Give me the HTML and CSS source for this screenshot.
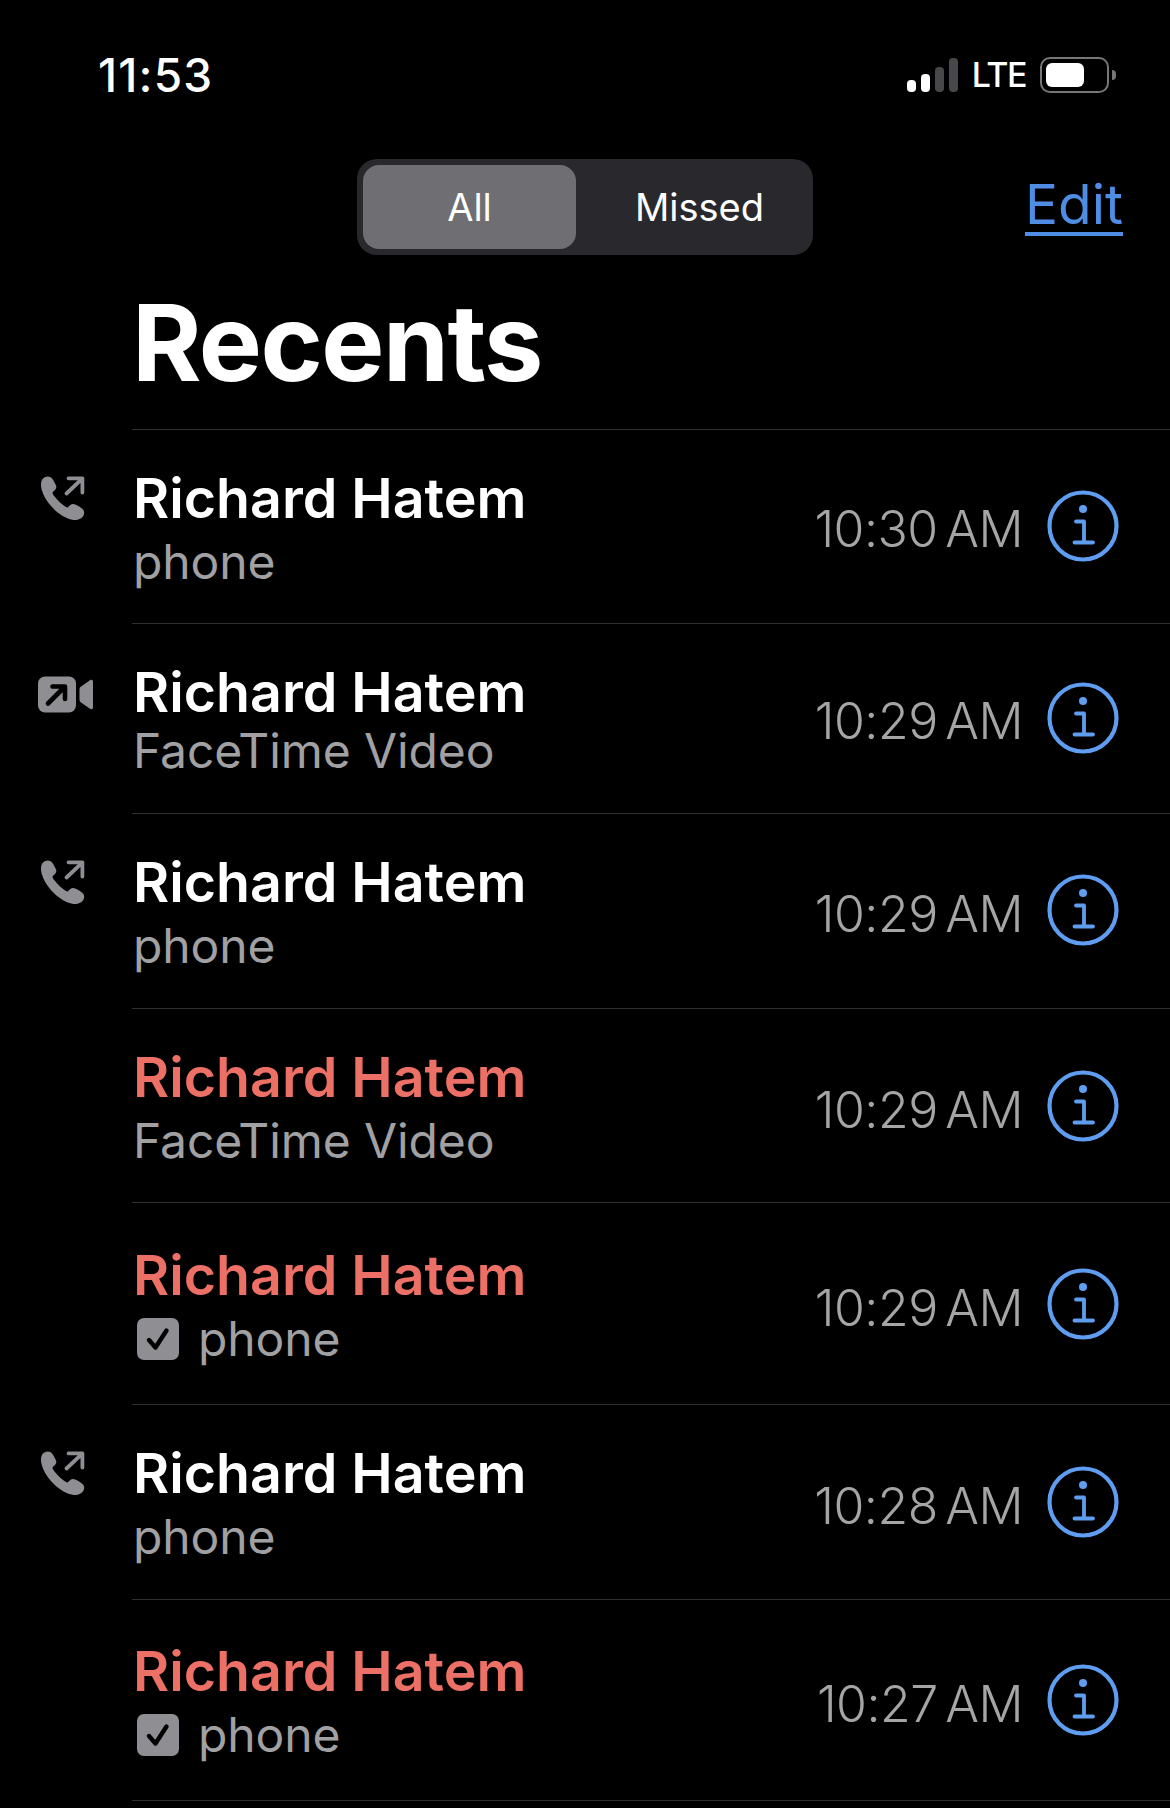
FILE: index.html
```html
<!DOCTYPE html>
<html lang="en">

<head>
    <meta charset="UTF-8">
    <meta name="viewport" content="width=device-width, initial-scale=1.0">
    <title>Recents</title>
    <link rel="stylesheet" href="styles.css">
</head>

<body>
    <svg class="defs" width="0" height="0" aria-hidden="true">
        <symbol id="icon-outgoing" viewBox="0 0 44 44">
            <path d="M1.500 3C3.500 .5 7.500 -.3 10 1.500C11.800 2.800 14 7 15 9.500C15.800 11.500 15 13.200 13.500 14.500L12 15.800C11.400 16.500 11.400 17.300 12 18.300C14.500 22.500 20 28 25 31C26 31.600 26.800 31.600 27.500 30.800L29 29.300C30.500 27.800 32.300 27.500 34.300 28.500C37 29.800 40.500 31.800 42 33.500C43.800 35.500 43.500 38.800 41.500 41C39 43.600 35.500 44.500 31.500 43.800C23 42.300 13.500 35 7.500 27C2.500 20.500 -.500 13 0 7.500C.200 5.800 .700 4 1.500 3Z" fill="currentColor" />
            <path d="M25.500 17.500L41 2.800M27.500 2.300H41.400V16.500" fill="none" stroke="currentColor" stroke-width="3.800" stroke-linecap="round" stroke-linejoin="round" />
        </symbol>
        <symbol id="icon-video" viewBox="0 0 56 38">
            <rect x="0" y="0.500" width="38" height="36" rx="7" fill="currentColor" />
            <path d="M10 27.500L26 11.500M14.500 10.500H27V23" fill="none" stroke="#000" stroke-width="4.600" stroke-linecap="round" stroke-linejoin="round" />
            <path d="M41.500 13.500C41.500 12.200 42 11.300 43 10.500L52 4.200C53.500 3.200 55 4 55 5.800V31.200C55 33 53.500 33.800 52 32.800L43 26.500C42 25.700 41.500 24.800 41.500 23.500Z" fill="currentColor" />
        </symbol>
        <symbol id="icon-info" viewBox="0 0 72 72">
            <circle cx="36" cy="36" r="33.500" fill="none" stroke="currentColor" stroke-width="4.200" />
            <circle cx="36" cy="19" r="4" fill="currentColor" />
            <path d="M29 31.500H37V52.500M27.500 52.500H46" fill="none" stroke="currentColor" stroke-width="3.800" stroke-linecap="round" stroke-linejoin="round" />
        </symbol>
        <symbol id="icon-check" viewBox="0 0 42 42">
            <rect width="42" height="42" rx="7" fill="currentColor" />
            <path d="M12 22L18.500 29.500L29.500 12.500" fill="none" stroke="#000" stroke-width="4.400" stroke-linecap="round" stroke-linejoin="round" />
        </symbol>
    </svg>

    <div class="status-bar">
        <span class="clock">11:53</span>
        <div class="status-icons">
            <div class="signal">
                <span class="bar bar1"></span>
                <span class="bar bar2"></span>
                <span class="bar bar3 off"></span>
                <span class="bar bar4 off"></span>
            </div>
            <span class="network">LTE</span>
            <div class="battery"><span class="battery-fill"></span></div>
            <span class="battery-nub"></span>
        </div>
    </div>

    <div class="nav">
        <div class="segments">
            <span class="segment selected">All</span>
            <span class="segment missed-tab">Missed</span>
        </div>
        <a class="edit" href="#">Edit</a>
    </div>

    <h1 class="title">Recents</h1>

    <ul class="calls">
        <li class="call">
            <div class="call-type"><svg class="icon-outgoing"><use href="#icon-outgoing" /></svg></div>
            <div class="call-body">
                <div class="call-text">
                    <div class="name">Richard Hatem</div>
                    <div class="label">phone</div>
                </div>
                <span class="time">10:30 AM</span>
                <svg class="info"><use href="#icon-info" /></svg>
            </div>
        </li>
        <li class="call short">
            <div class="call-type"><svg class="icon-video"><use href="#icon-video" /></svg></div>
            <div class="call-body">
                <div class="call-text">
                    <div class="name">Richard Hatem</div>
                    <div class="label tight">FaceTime Video</div>
                </div>
                <span class="time">10:29 AM</span>
                <svg class="info"><use href="#icon-info" /></svg>
            </div>
        </li>
        <li class="call wide">
            <div class="call-type"><svg class="icon-outgoing"><use href="#icon-outgoing" /></svg></div>
            <div class="call-body">
                <div class="call-text">
                    <div class="name">Richard Hatem</div>
                    <div class="label">phone</div>
                </div>
                <span class="time">10:29 AM</span>
                <svg class="info"><use href="#icon-info" /></svg>
            </div>
        </li>
        <li class="call lower">
            <div class="call-type"></div>
            <div class="call-body">
                <div class="call-text">
                    <div class="name missed">Richard Hatem</div>
                    <div class="label">FaceTime Video</div>
                </div>
                <span class="time">10:29 AM</span>
                <svg class="info"><use href="#icon-info" /></svg>
            </div>
        </li>
        <li class="call tall lower">
            <div class="call-type"></div>
            <div class="call-body">
                <div class="call-text">
                    <div class="name missed">Richard Hatem</div>
                    <div class="label"><svg class="check"><use href="#icon-check" /></svg>phone</div>
                </div>
                <span class="time">10:29 AM</span>
                <svg class="info"><use href="#icon-info" /></svg>
            </div>
        </li>
        <li class="call wide lower">
            <div class="call-type"><svg class="icon-outgoing"><use href="#icon-outgoing" /></svg></div>
            <div class="call-body">
                <div class="call-text">
                    <div class="name">Richard Hatem</div>
                    <div class="label">phone</div>
                </div>
                <span class="time">10:28 AM</span>
                <svg class="info"><use href="#icon-info" /></svg>
            </div>
        </li>
        <li class="call tall lower last">
            <div class="call-type"></div>
            <div class="call-body">
                <div class="call-text">
                    <div class="name missed">Richard Hatem</div>
                    <div class="label"><svg class="check"><use href="#icon-check" /></svg>phone</div>
                </div>
                <span class="time">10:27 AM</span>
                <svg class="info"><use href="#icon-info" /></svg>
            </div>
        </li>
    </ul>
</body>

</html>
```

FILE: styles.css
```css
/* Basic page styling */
body {
    margin: 0;
    height: 1808px;
    overflow: hidden;
    background-color: #000;
    color: #fff;
    font-family: Inter, "Liberation Sans", sans-serif;
}

.defs {
    display: block;
    height: 0;
}

/* Status bar */
.status-bar {
    display: flex;
    align-items: center;
    justify-content: space-between;
    height: 150px;
    padding: 0 54px 0 98px;
}

.clock {
    font-size: 46px;
    font-weight: 500;
    letter-spacing: 1.2px;
}

.status-icons {
    display: flex;
    align-items: center;
}

.signal {
    display: flex;
    align-items: flex-end;
    gap: 5px;
    height: 34px;
}

.bar {
    width: 9px;
    border-radius: 4px;
    background-color: #fff;
}

.bar1 {
    height: 12px;
}

.bar2 {
    height: 18px;
}

.bar3 {
    height: 25px;
}

.bar4 {
    height: 34px;
}

.bar.off {
    background-color: #48484a;
}

.network {
    margin-left: 14px;
    font-size: 34px;
    font-weight: 500;
    line-height: 34px;
    letter-spacing: -1.5px;
}

.battery {
    display: flex;
    align-items: center;
    box-sizing: border-box;
    width: 69px;
    height: 36px;
    margin-left: 14px;
    padding-left: 4px;
    border: 2px solid #77777a;
    border-radius: 10px;
}

.battery-fill {
    width: 38px;
    height: 24px;
    border-radius: 6px;
    background-color: #fff;
}

.battery-nub {
    width: 4px;
    height: 10px;
    margin-left: 3px;
    border-radius: 0 5px 5px 0;
    background-color: #77777a;
}

/* Segmented control and edit link */
.nav {
    display: flex;
    align-items: center;
    justify-content: space-between;
    height: 96px;
    margin-top: 9px;
    padding: 0 47px 0 357px;
}

.segments {
    display: flex;
    box-sizing: border-box;
    width: 456px;
    height: 96px;
    padding: 6px;
    border-radius: 20px;
    background-color: #29292d;
}

.segment {
    display: flex;
    align-items: center;
    justify-content: center;
    flex: 1;
    font-size: 38px;
    font-weight: 400;
}

.segment.selected {
    flex: 0 0 213px;
    border-radius: 16px;
    background-color: #6e6e73;
}

.missed-tab {
    padding-left: 16px;
}

.edit {
    margin-top: -2px;
    color: #4f8de4;
    font-size: 55px;
    line-height: 56px;
    text-decoration: none;
    border-bottom: 4px solid #4f8de4;
}

/* Large title */
.title {
    margin: 20px 0 0 132px;
    height: 153px;
    font-size: 106px;
    font-weight: 700;
    line-height: 135px;
    letter-spacing: -1.5px;
}

/* Call rows */
.calls {
    margin: 0;
    padding: 0;
    list-style: none;
    border-top: 1px solid transparent;
}

.call {
    display: flex;
    height: 194px;
}

.call.short {
    height: 190px;
}

.call.wide {
    height: 195px;
}

.call.tall {
    height: 202px;
}

.call-type {
    display: flex;
    justify-content: center;
    width: 132px;
    padding-top: 47px;
    box-sizing: border-box;
}

.icon-outgoing {
    width: 44px;
    height: 44px;
    margin-left: -7px;
    color: #8e8e93;
}

.icon-video {
    width: 56px;
    height: 38px;
    margin-top: 6px;
    margin-left: -1px;
    color: #8e8e93;
}

.call-body {
    display: flex;
    align-items: center;
    flex: 1;
    padding-right: 51px;
    border-top: 1px solid #2f2f31;
}

.call.last .call-body {
    border-bottom: 1px solid #2f2f31;
}

.call-text {
    flex: 1;
    padding-left: 1px;
    margin-top: 4px;
}

.name {
    font-size: 55.5px;
    font-weight: 600;
    line-height: 64px;
}

.name.missed {
    color: #ec7065;
}

.label {
    display: flex;
    align-items: center;
    margin-top: 2px;
    color: #a1a1a3;
    font-size: 48px;
    line-height: 60px;
    letter-spacing: -0.1px;
}

.label.tight {
    margin-top: -3px;
}

.check {
    width: 42px;
    height: 42px;
    margin-right: 19px;
    margin-left: 4px;
    color: #8e8e93;
}

.time {
    margin-top: 5px;
    color: #a5a5a7;
    font-size: 50px;
    font-weight: 300;
    letter-spacing: -0.5px;
    word-spacing: -6px;
}

.info {
    width: 72px;
    height: 72px;
    margin-bottom: 2px;
    margin-left: 24px;
    color: #5e9df0;
}

/* Rows further down sit a touch lower in the photo */
.lower .time {
    margin-top: 8px;
}

.lower .info {
    margin-bottom: 0;
}
```
